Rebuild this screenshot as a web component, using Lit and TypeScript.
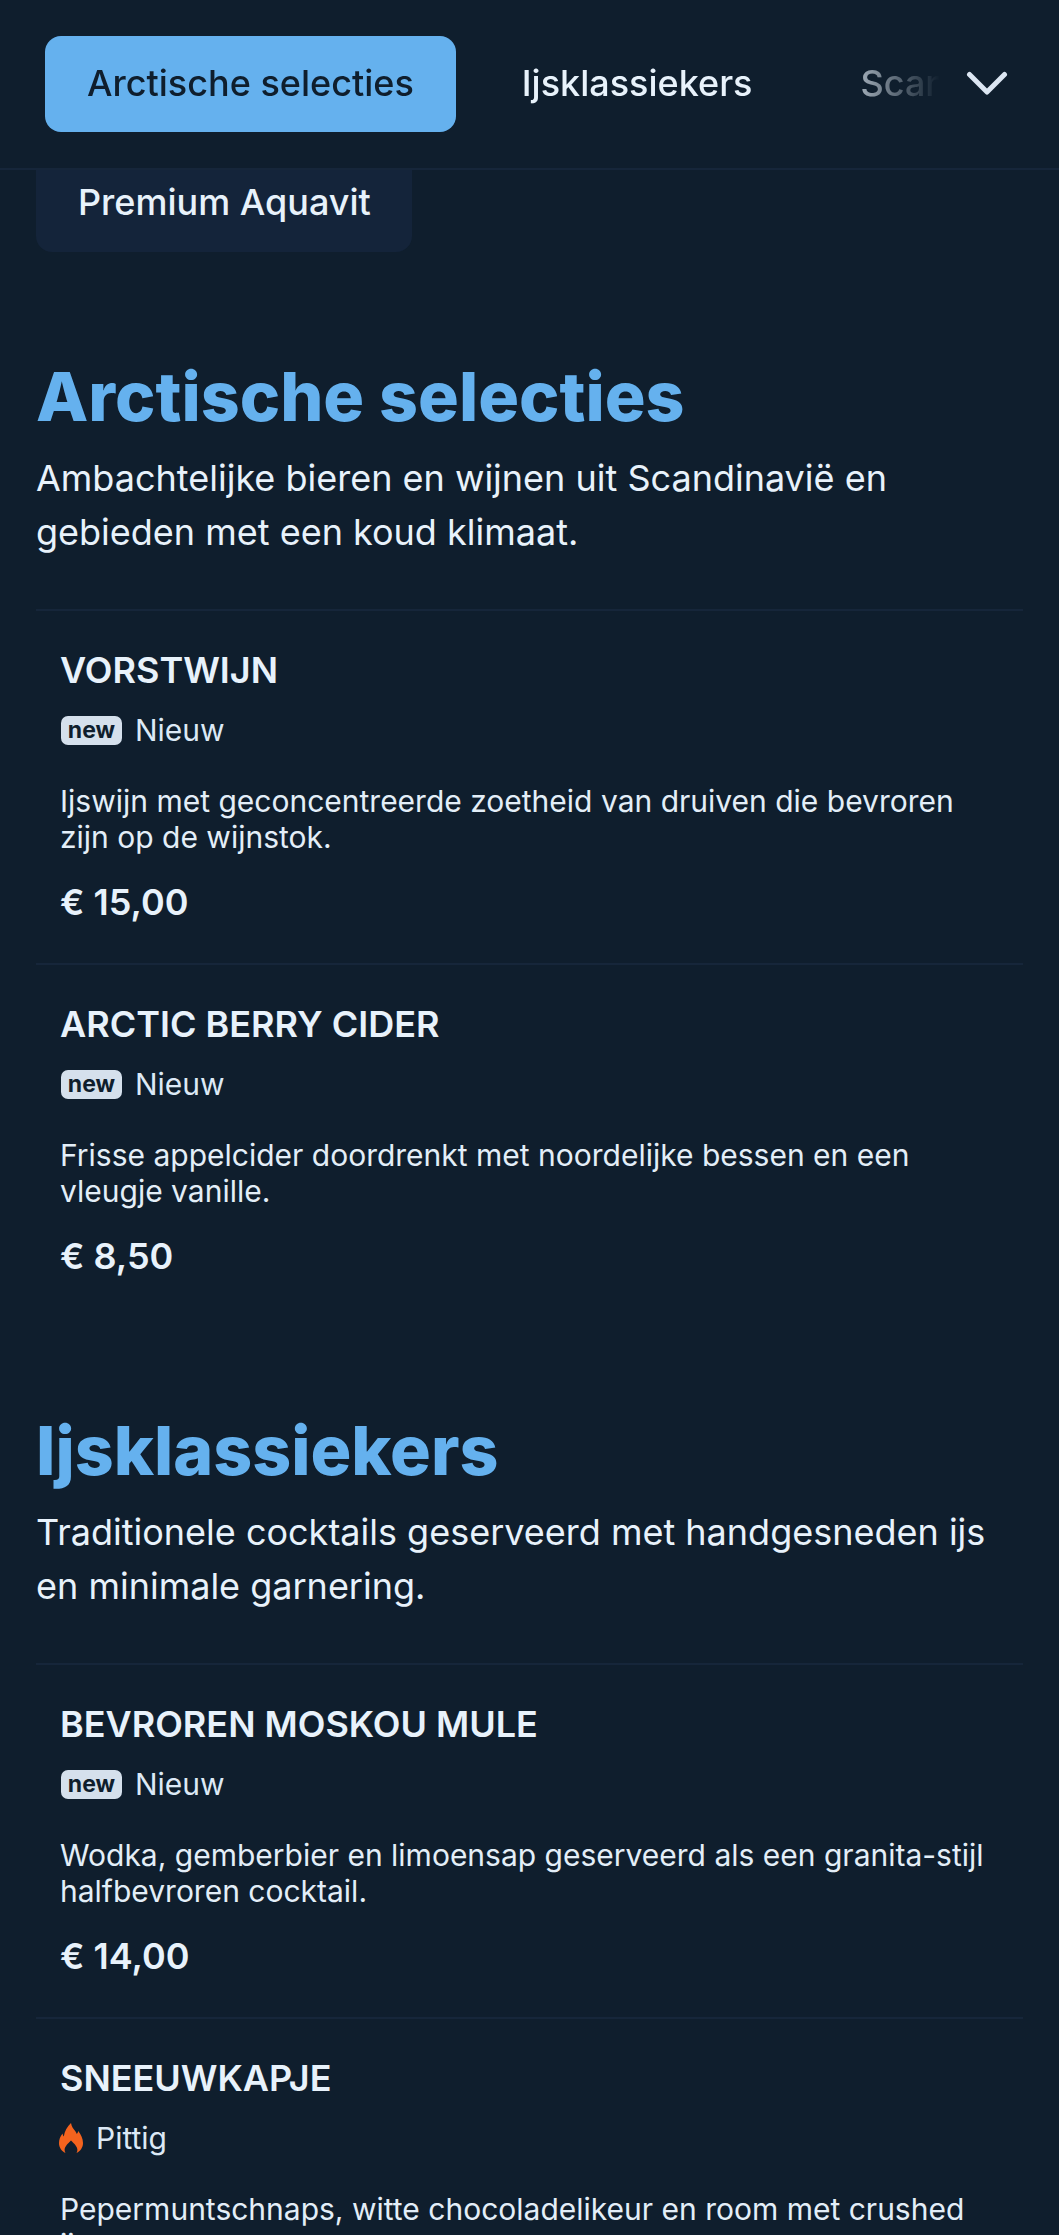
import { LitElement, html, css, nothing } from "lit";
import { customElement } from "lit/decorators.js";

interface Item { name: string; tag: "new" | "hot"; desc: string[]; price?: string }
interface Section { title: string; intro: string[]; items: Item[] }

const sections: Section[] = [
  {
    title: "Arctische selecties",
    intro: ["Ambachtelijke bieren en wijnen uit Scandinavië en", "gebieden met een koud klimaat."],
    items: [
      { name: "VORSTWIJN", tag: "new", desc: ["Ijswijn met geconcentreerde zoetheid van druiven die bevroren", "zijn op de wijnstok."], price: "€ 15,00" },
      { name: "ARCTIC BERRY CIDER", tag: "new", desc: ["Frisse appelcider doordrenkt met noordelijke bessen en een", "vleugje vanille."], price: "€ 8,50" },
    ],
  },
  {
    title: "Ijsklassiekers",
    intro: ["Traditionele cocktails geserveerd met handgesneden ijs", "en minimale garnering."],
    items: [
      { name: "BEVROREN MOSKOU MULE", tag: "new", desc: ["Wodka, gemberbier en limoensap geserveerd als een granita-stijl", "halfbevroren cocktail."], price: "€ 14,00" },
      { name: "SNEEUWKAPJE", tag: "hot", desc: ["Pepermuntschnaps, witte chocoladelikeur en room met crushed", "ijs."] },
    ],
  },
];

@customElement("app-root")
export class AppRoot extends LitElement {
  static styles = css`
    :host { display: block; width: 1059px; height: 2235px; overflow: hidden; background: #0f1e2d; color: #e8f2fb; font-family: Inter, "Liberation Sans", sans-serif; }
    .bar { height: 168px; border-bottom: 2px solid #16263a; display: flex; align-items: flex-start; box-sizing: content-box; }
    .tabs { display: flex; gap: 24px; padding: 36px 0 0 45px; width: 940px; box-sizing: border-box; overflow: hidden; flex: none; white-space: nowrap; -webkit-mask-image: linear-gradient(to right, #000 820px, transparent 940px); mask-image: linear-gradient(to right, #000 820px, transparent 940px); }
    .tab { height: 96px; padding: 0 42px 2px; box-sizing: border-box; border-radius: 16px; display: flex; align-items: center; font-size: 36px; font-weight: 500; flex: none; }
    .tab.on { background: #65b1ee; color: #0f1e2d; }
    .chev { margin: 70px 0 0 24px; width: 44px; height: 28px; flex: none; }
    .chip { margin: 0 0 11px 36px; width: 376px; height: 82px; box-sizing: border-box; background: #14243a; border-radius: 0 0 16px 16px; padding: 0 0 18px 42px; display: flex; align-items: center; font-size: 36px; font-weight: 500; }
    section { padding: 98px 36px 0; }
    h2 { margin: 0; font-size: 68px; line-height: 70px; font-weight: 800; color: #65b1ee; letter-spacing: 0; }
    .intro { margin: 20px 0 0; font-size: 36px; line-height: 54px; }
    .list { margin-top: 50px; }
    .item { height: 354px; box-sizing: border-box; border-top: 2px solid #16263a; padding: 38px 24px 0; }
    .name { font-size: 36px; line-height: 42px; font-weight: 600; color: #e8f2fb; }
    .tags { margin-top: 18px; display: flex; align-items: center; height: 42px; font-size: 30px; color: #dce9f5; }
    .badge { width: 61px; height: 29px; background: #d5e0ec; border-radius: 7px; color: #0f1e2d; font-size: 23px; font-weight: 700; display: flex; align-items: center; justify-content: center; margin: 0 13px 0 1px; line-height: 1; }
    .flame { width: 24px; height: 31px; margin: 0 13px 0 -1px; flex: none; }
    .desc { margin-top: 32px; font-size: 30px; line-height: 36px; color: #e3eef8; }
    .price { margin-top: 25px; font-size: 36px; line-height: 44px; font-weight: 600; }
  `;

  private flame() {
    return html`<svg class="flame" viewBox="0 0 24 31"><path fill="#f4631e" d="M12 0c.5 3.500 2.500 6 4.500 8.500.6 1 1 1.800 1.300 2.500.7-.7 1.200-1.800 1.400-3C22 11.500 24 15.500 24 20c0 4.500-2.500 8-6.500 10 .6-1 .9-2 .9-3.200 0-3-3-6-6.400-9.300-3.400 3.300-6.400 6.300-6.400 9.300 0 1.200.3 2.200.9 3.200C2.500 28 0 24.500 0 20c0-3.500 1.300-6.500 3.500-9.500.2 1.300.6 2.300 1.300 3C5.500 8.500 8 3.500 12 0Z"/></svg>`;
  }

  private renderItem(it: Item) {
    return html`<div class="item">
      <div class="name">${it.name}</div>
      <div class="tags">
        ${it.tag === "new" ? html`<span class="badge">new</span>Nieuw` : html`${this.flame()}Pittig`}
      </div>
      <div class="desc">${it.desc.map((l) => html`${l}<br />`)}</div>
      ${it.price ? html`<div class="price">${it.price}</div>` : nothing}
    </div>`;
  }

  render() {
    return html`
      <div class="bar">
        <div class="tabs">
          <div class="tab on">Arctische selecties</div>
          <div class="tab">Ijsklassiekers</div>
          <div class="tab">Scandinavische</div>
        </div>
        <svg class="chev" viewBox="0 0 44 28" fill="none" stroke="#dce6f2" stroke-width="5" stroke-linecap="round" stroke-linejoin="round"><path d="M5.500 4.500 23 22 40.500 4.500"/></svg>
      </div>
      <div class="chip">Premium Aquavit</div>
      ${sections.map((s) => html`<section>
        <h2>${s.title}</h2>
        <div class="intro">${s.intro.map((l) => html`${l}<br />`)}</div>
        <div class="list">${s.items.map((i) => this.renderItem(i))}</div>
      </section>`)}
    `;
  }
}
